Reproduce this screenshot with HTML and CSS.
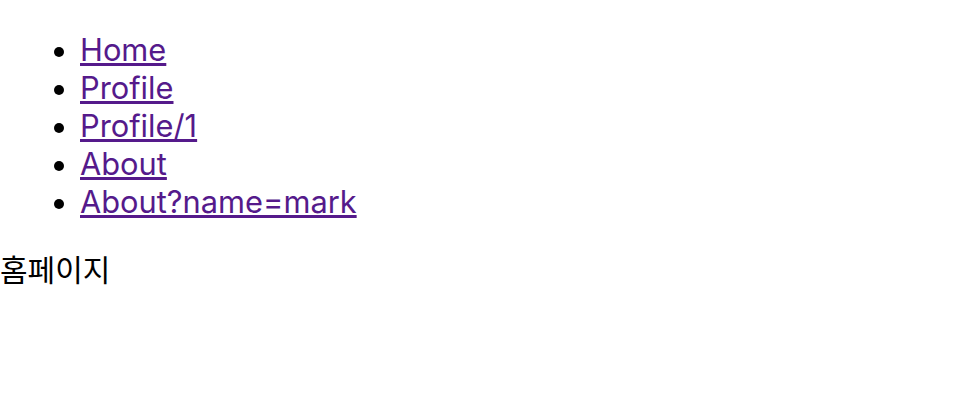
FILE: index.html
```html
<!DOCTYPE html>
<html lang="ko">
<head>
<meta charset="utf-8">
<link rel="stylesheet" href="styles.css">
</head>
<body>
<ul class="nav">
  <li><a href="#">Home</a></li>
  <li><a href="#">Profile</a></li>
  <li><a href="#">Profile/1</a></li>
  <li><a href="#">About</a></li>
  <li><a href="#">About?name=mark</a></li>
</ul>
<p class="page">홈페이지</p>
</body>
</html>
```
FILE: styles.css
```css
html, body {
  margin: 0;
  padding: 0;
  background: #fff;
}
body {
  font-family: Inter, "Noto Sans CJK KR", sans-serif;
  font-size: 30px;
  line-height: 38px;
  color: #000;
}
.nav {
  margin: 31px 0 30px 0;
  padding-left: 80px;
}
.nav a {
  font-size: 30.8px;
  color: #551a8b;
  text-decoration: underline;
}
.page {
  margin: 30px 0;
}
```
